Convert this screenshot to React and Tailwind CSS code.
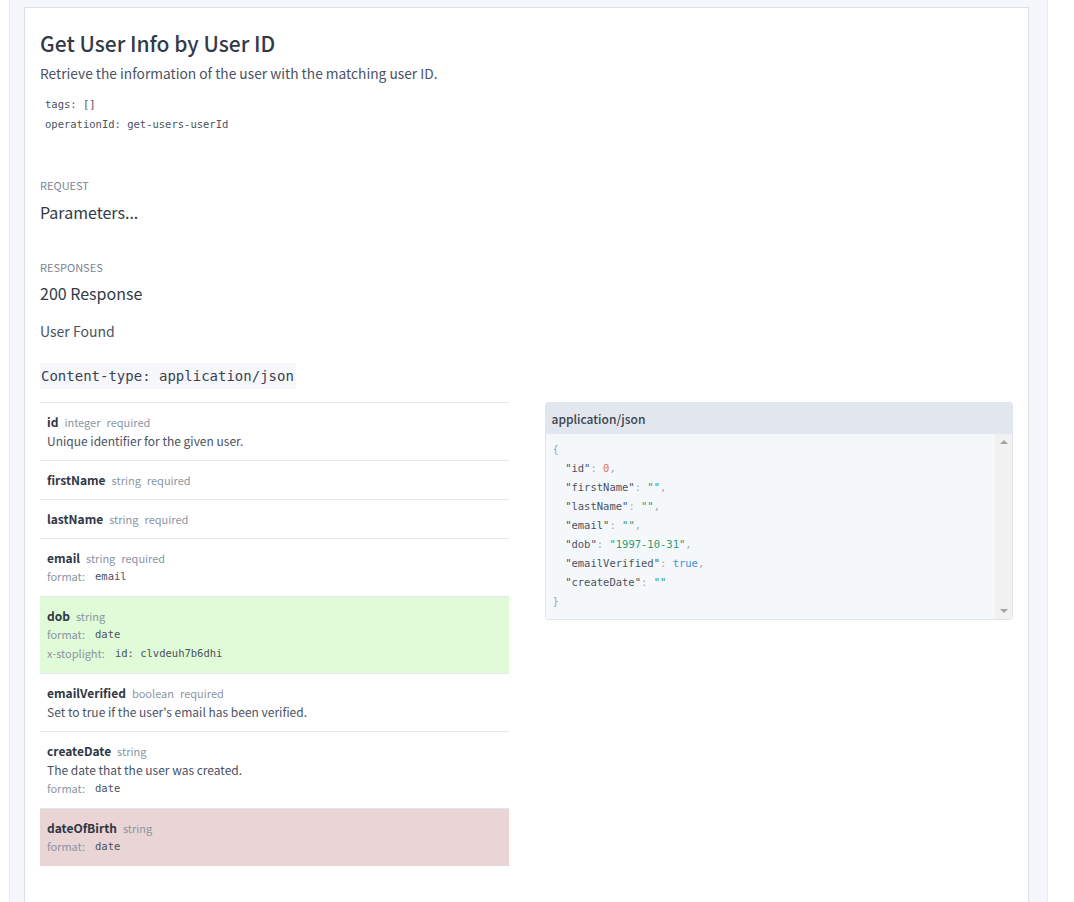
import React from "react";

const sans = "font-['Noto_Sans_CJK_KR','Noto_Sans',sans-serif]";
const mono = "font-['DejaVu_Sans_Mono','Liberation_Mono',monospace]";

const fields = [
  { name: "id", type: "integer", required: true, desc: "Unique identifier for the given user." },
  { name: "firstName", type: "string", required: true },
  { name: "lastName", type: "string", required: true },
  { name: "email", type: "string", required: true, format: "email" },
  { name: "dob", type: "string", format: "date", stoplight: "clvdeuh7b6dhi", tone: "added" },
  { name: "emailVerified", type: "boolean", required: true, desc: "Set to true if the user's email has been verified." },
  { name: "createDate", type: "string", desc: "The date that the user was created.", format: "date" },
  { name: "dateOfBirth", type: "string", format: "date", tone: "removed" },
];

const FieldRow = ({ field }) => {
  const bg =
    field.tone === "added"
      ? "bg-[#e0fbd7]"
      : field.tone === "removed"
        ? "bg-[#e9d5d5]"
        : "bg-white";

  return (
    <div className={`border-t border-[#e3e6eb] px-[7px] pt-[10px] pb-[10px] ${bg}`}>
      <div className="flex h-[18px] items-center">
        <span className="text-[12px] leading-[18px] font-semibold text-[#2f3745]">{field.name}</span>
        <span className="ml-[6px] text-[11px] leading-[18px] text-[#8c95a4]">{field.type}</span>
        {field.required && (
          <span className="ml-[6px] text-[11px] leading-[18px] text-[#8c95a4]">required</span>
        )}
      </div>
      {field.desc && (
        <div className="h-[19px] text-[12px] leading-[19px] text-[#4a5263]">{field.desc}</div>
      )}
      {field.format && (
        <div className="flex h-[19px] items-center">
          <span className="text-[11px] leading-[19px] text-[#8a94a6]">format:</span>
          <span className={`${mono} ml-[10px] text-[10.5px] leading-[19px] text-[#4a5263]`}>
            {field.format}
          </span>
        </div>
      )}
      {field.stoplight && (
        <div className="flex h-[19px] items-center">
          <span className="text-[11px] leading-[19px] text-[#8a94a6]">x-stoplight:</span>
          <span className={`${mono} ml-[10px] text-[10.5px] leading-[19px] text-[#4a5263]`}>
            id: {field.stoplight}
          </span>
        </div>
      )}
    </div>
  );
};

const K = ({ children }) => <span className="text-[#4a5263]">{children}</span>;
const P = ({ children }) => <span className="text-[#a0a8b5]">{children}</span>;
const S = ({ children }) => <span className="text-[#2e9b72]">{children}</span>;

const ExamplePanel = () => (
  <div className="h-[218px] rounded-[3px] border border-[#e1e5ec] overflow-hidden">
    <div className="h-[31px] bg-[#e2e6ee] pl-[6px] text-[12px] leading-[31px] font-medium text-[#3a4251]">
      application/json
    </div>
    <div className="flex h-[185px] bg-[#f5f8fb]">
      <pre className={`${mono} flex-1 pl-[7px] pt-[6px] text-[10.5px] leading-[19px] text-[#4a5263]`}>
        <P>{"{"}</P>
        {"\n  "}
        <K>"id"</K><P>: </P><span className="text-[#e8704f]">0</span><P>,</P>
        {"\n  "}
        <K>"firstName"</K><P>: </P><S>""</S><P>,</P>
        {"\n  "}
        <K>"lastName"</K><P>: </P><S>""</S><P>,</P>
        {"\n  "}
        <K>"email"</K><P>: </P><S>""</S><P>,</P>
        {"\n  "}
        <K>"dob"</K><P>: </P><S>"1997-10-31"</S><P>,</P>
        {"\n  "}
        <K>"emailVerified"</K><P>: </P><span className="text-[#3a93d4]">true</span><P>,</P>
        {"\n  "}
        <K>"createDate"</K><P>: </P><S>""</S>
        {"\n"}
        <P>{"}"}</P>
      </pre>
      <div className="flex w-[17px] flex-col items-center justify-between bg-[#f1f1f1] py-[6px]">
        <div className="h-0 w-0 border-x-[4px] border-b-[4px] border-x-transparent border-b-[#a3a3a3]" />
        <div className="h-0 w-0 border-x-[4px] border-t-[4px] border-x-transparent border-t-[#a3a3a3]" />
      </div>
    </div>
  </div>
);

export default function App() {
  return (
    <div className={`${sans} min-h-screen bg-white`}>
      <div className="ml-[9px] w-[1039px] border-x border-[#e9ebf0] bg-[#f6f7fb] pt-[7px] pl-[14px] pr-[18px]">
        <div className="w-[1005px] border border-[#dcdfe5] bg-white px-[15px] pt-[21px] pb-[60px]">
          <h1 className="text-[21px] leading-[28px] font-medium text-[#323a48]">
            Get User Info by User ID
          </h1>
          <p className="mt-[6px] text-[13.75px] leading-[20px] text-[#4a5263]">
            Retrieve the information of the user with the matching user ID.
          </p>
          <pre className={`${mono} mt-[11px] pl-[5px] text-[10.5px] leading-[20px] text-[#4a5263]`}>
            {"tags: []\noperationId: get-users-userId"}
          </pre>

          <div className="mt-[43px] text-[11px] leading-[16px] uppercase text-[#7b8494]">
            Request
          </div>
          <div className="mt-[7px] text-[16px] leading-[24px] text-[#323a48]">Parameters...</div>

          <div className="mt-[35px] text-[11px] leading-[16px] uppercase text-[#7b8494]">
            Responses
          </div>
          <div className="mt-[6px] text-[16px] leading-[24px] text-[#323a48]">200 Response</div>
          <div className="mt-[16px] text-[14px] leading-[20px] text-[#4a5263]">User Found</div>

          <div className="mt-[21px] h-[26px]">
            <span className={`${mono} inline-block h-[26px] bg-[#f5f7fa] pl-[1px] pr-[2px] text-[14px] leading-[26px] text-[#3a4251]`}>
              Content-type: application/json
            </span>
          </div>

          <div className="mt-[14px] grid grid-cols-2 gap-[36px]">
            <div>
              {fields.map((f) => (
                <FieldRow key={f.name} field={f} />
              ))}
            </div>
            <div>
              <ExamplePanel />
            </div>
          </div>
        </div>
      </div>
    </div>
  );
}
